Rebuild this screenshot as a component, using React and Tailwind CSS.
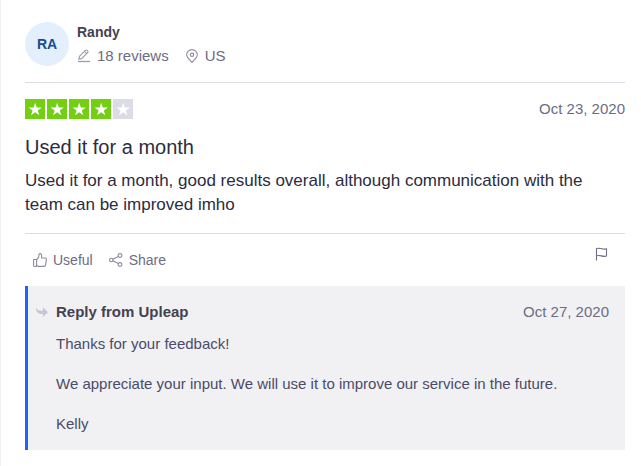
import React from 'react';

const review = {
  author: 'Randy',
  initials: 'RA',
  reviewCount: 18,
  country: 'US',
  rating: 4,
  date: 'Oct 23, 2020',
  title: 'Used it for a month',
  text: 'Used it for a month, good results overall, although communication with the team can be improved imho',
  reply: {
    company: 'Upleap',
    date: 'Oct 27, 2020',
    paragraphs: [
      'Thanks for your feedback!',
      'We appreciate your input. We will use it to improve our service in the future.',
      'Kelly',
    ],
  },
};

const PencilIcon = () => (
  <svg className="w-3.5 h-3.5" viewBox="0 0 14 14" fill="none" stroke="currentColor" strokeWidth="1.1" strokeLinejoin="round" aria-hidden="true">
    <path d="M1.8 10.2 2.4 7.3 8.3 1.4a1.3 1.3 0 0 1 1.8 0l.5.5a1.3 1.3 0 0 1 0 1.8L4.700 9.600z" />
    <path d="M7.400 2.400 9.600 4.600" />
    <path d="M1 12.500h12" strokeWidth="1.300" />
  </svg>
);

const PinIcon = () => (
  <svg className="w-3.5 h-3.5" viewBox="0 0 14 14" fill="none" stroke="currentColor" strokeWidth="1.1" aria-hidden="true">
    <path d="M7 13.3C5 11.2 1.700 8.600 1.700 5.800a5.300 5.200 0 0 1 10.600 0C12.300 8.600 9 11.200 7 13.300z" />
    <circle cx="7" cy="5.800" r="1.700" />
  </svg>
);

const ThumbIcon = () => (
  <svg className="w-3.5 h-3.5" viewBox="0 0 14 14" fill="none" stroke="currentColor" strokeWidth="1.1" strokeLinejoin="round" aria-hidden="true">
    <path d="M.6 6.500h3v7h-2a1 1 0 0 1-1-1z" />
    <path d="M3.600 6.700C5.500 5.400 6 4.200 6 2V1.500C6 .2 8.600.2 8.600 2.200V5h3.600a1.200 1.200 0 0 1 1.200 1.400l-.7 5.200a2 2 0 0 1-2 1.800H5.500l-1.900-1" />
  </svg>
);

const ShareIcon = () => (
  <svg className="w-3.5 h-3.5" viewBox="0 0 14 14" fill="none" stroke="currentColor" strokeWidth="1.1" aria-hidden="true">
    <circle cx="2.300" cy="7" r="1.700" />
    <circle cx="11" cy="2.500" r="1.900" />
    <circle cx="11" cy="11.500" r="1.900" />
    <path d="M3.900 6.200 9.300 3.400M3.900 7.800l5.400 2.800" />
  </svg>
);

const FlagIcon = () => (
  <svg className="w-3.5 h-3.5" viewBox="0 0 14 14" fill="none" stroke="currentColor" strokeWidth="1.1" strokeLinejoin="round" aria-hidden="true">
    <path d="M1.500 13.500V1.500c2-.4 3.200-.4 5.200.2s3 .6 4.800 0v7.300c-1.500.6-3 .5-5-.1s-3.200-.5-5-.2" />
  </svg>
);

const ReplyIcon = () => (
  <svg className="w-3 h-3" viewBox="0 0 12 12" fill="currentColor" aria-hidden="true">
    <path d="M0 1.500C1 4 3.500 4.900 7 4.600V1.200L12 6.200 7 11V7.900C3 8.200-.3 6.200 0 1.500z" />
  </svg>
);

const Star = ({ filled }) => (
  <svg className={`w-5 h-5 ${filled ? 'bg-[#73cf11]' : 'bg-[#dcdce6]'}`} viewBox="0 0 20 20" fill="white" aria-hidden="true">
    <path d="M10.200 3.800 11.800 8.500h5l-4 2.900 1.500 4.800-4.100-3-4.100 3 1.500-4.800-4-2.900h5z" />
  </svg>
);

const Stars = ({ rating }) => (
  <div className="flex gap-0.5" role="img" aria-label={`Rated ${rating} out of 5 stars`}>
    {[1, 2, 3, 4, 5].map((n) => (
      <Star key={n} filled={n <= rating} />
    ))}
  </div>
);

const ReviewHeader = () => (
  <header className="flex items-start gap-2 pt-5.5 pb-3.5 border-b border-[#dcdce6]">
    <div className="w-11 h-11 rounded-full bg-[#e3effc] text-[#1b4b8f] text-sm font-bold flex items-center justify-center">
      {review.initials}
    </div>
    <div className="flex flex-col gap-0.5">
      <div className="text-sm leading-5 font-bold text-[#45424f]">{review.author}</div>
      <div className="flex gap-4 text-[15px] leading-6 text-[#6c6c85]">
        <span className="flex items-center gap-1.5">
          <span className="text-[#9a9ab0]"><PencilIcon /></span>
          {review.reviewCount} reviews
        </span>
        <span className="flex items-center gap-1.5">
          <span className="text-[#8c8ca3]"><PinIcon /></span>
          {review.country}
        </span>
      </div>
    </div>
  </header>
);

const ReviewActions = () => (
  <footer className="flex items-center justify-between h-13 pl-2 pr-4 text-sm text-[#6c6c85]">
    <div className="flex gap-4">
      <button type="button" className="flex items-center gap-1.5">
        <span className="text-[#8c8ca3]"><ThumbIcon /></span>
        Useful
      </button>
      <button type="button" className="flex items-center gap-1.5">
        <span className="text-[#8c8ca3]"><ShareIcon /></span>
        Share
      </button>
    </div>
    <button type="button" aria-label="Report review" className="pb-3">
      <FlagIcon />
    </button>
  </footer>
);

const CompanyReply = ({ reply }) => (
  <section className="border-l-3 border-[#1b64ff] bg-[#f1f1f4] pl-2 pr-4 py-4 text-[#4b4b69]">
    <div className="flex items-center justify-between text-[15px] leading-5">
      <div className="flex items-center gap-2 font-bold text-[#45424f]">
        <span className="text-[#c6c6d6]"><ReplyIcon /></span>
        Reply from {reply.company}
      </div>
      <time className="text-[#6c6c85]">{reply.date}</time>
    </div>
    <div className="mt-3 pl-5 flex flex-col gap-5 text-[15px] leading-5">
      {reply.paragraphs.map((p) => (
        <p key={p}>{p}</p>
      ))}
    </div>
  </section>
);

const App = () => {
  return (
    <main className="min-h-screen bg-white border-l border-[#f1f1f4] pl-6 pr-4 pb-4 font-['Liberation_Sans',Arial,sans-serif]">
      <article>
        <ReviewHeader />
        <div className="pt-4 pb-4 border-b border-[#dcdce6] text-[#2c2c3f]">
          <div className="flex items-center justify-between">
            <Stars rating={review.rating} />
            <time className="text-[15px] leading-5 text-[#6c6c85]">{review.date}</time>
          </div>
          <h2 className="mt-4 text-xl leading-6 font-medium">{review.title}</h2>
          <p className="mt-2.5 text-[17px] leading-6">{review.text}</p>
        </div>
        <ReviewActions />
        <CompanyReply reply={review.reply} />
      </article>
    </main>
  );
};

export default App;
